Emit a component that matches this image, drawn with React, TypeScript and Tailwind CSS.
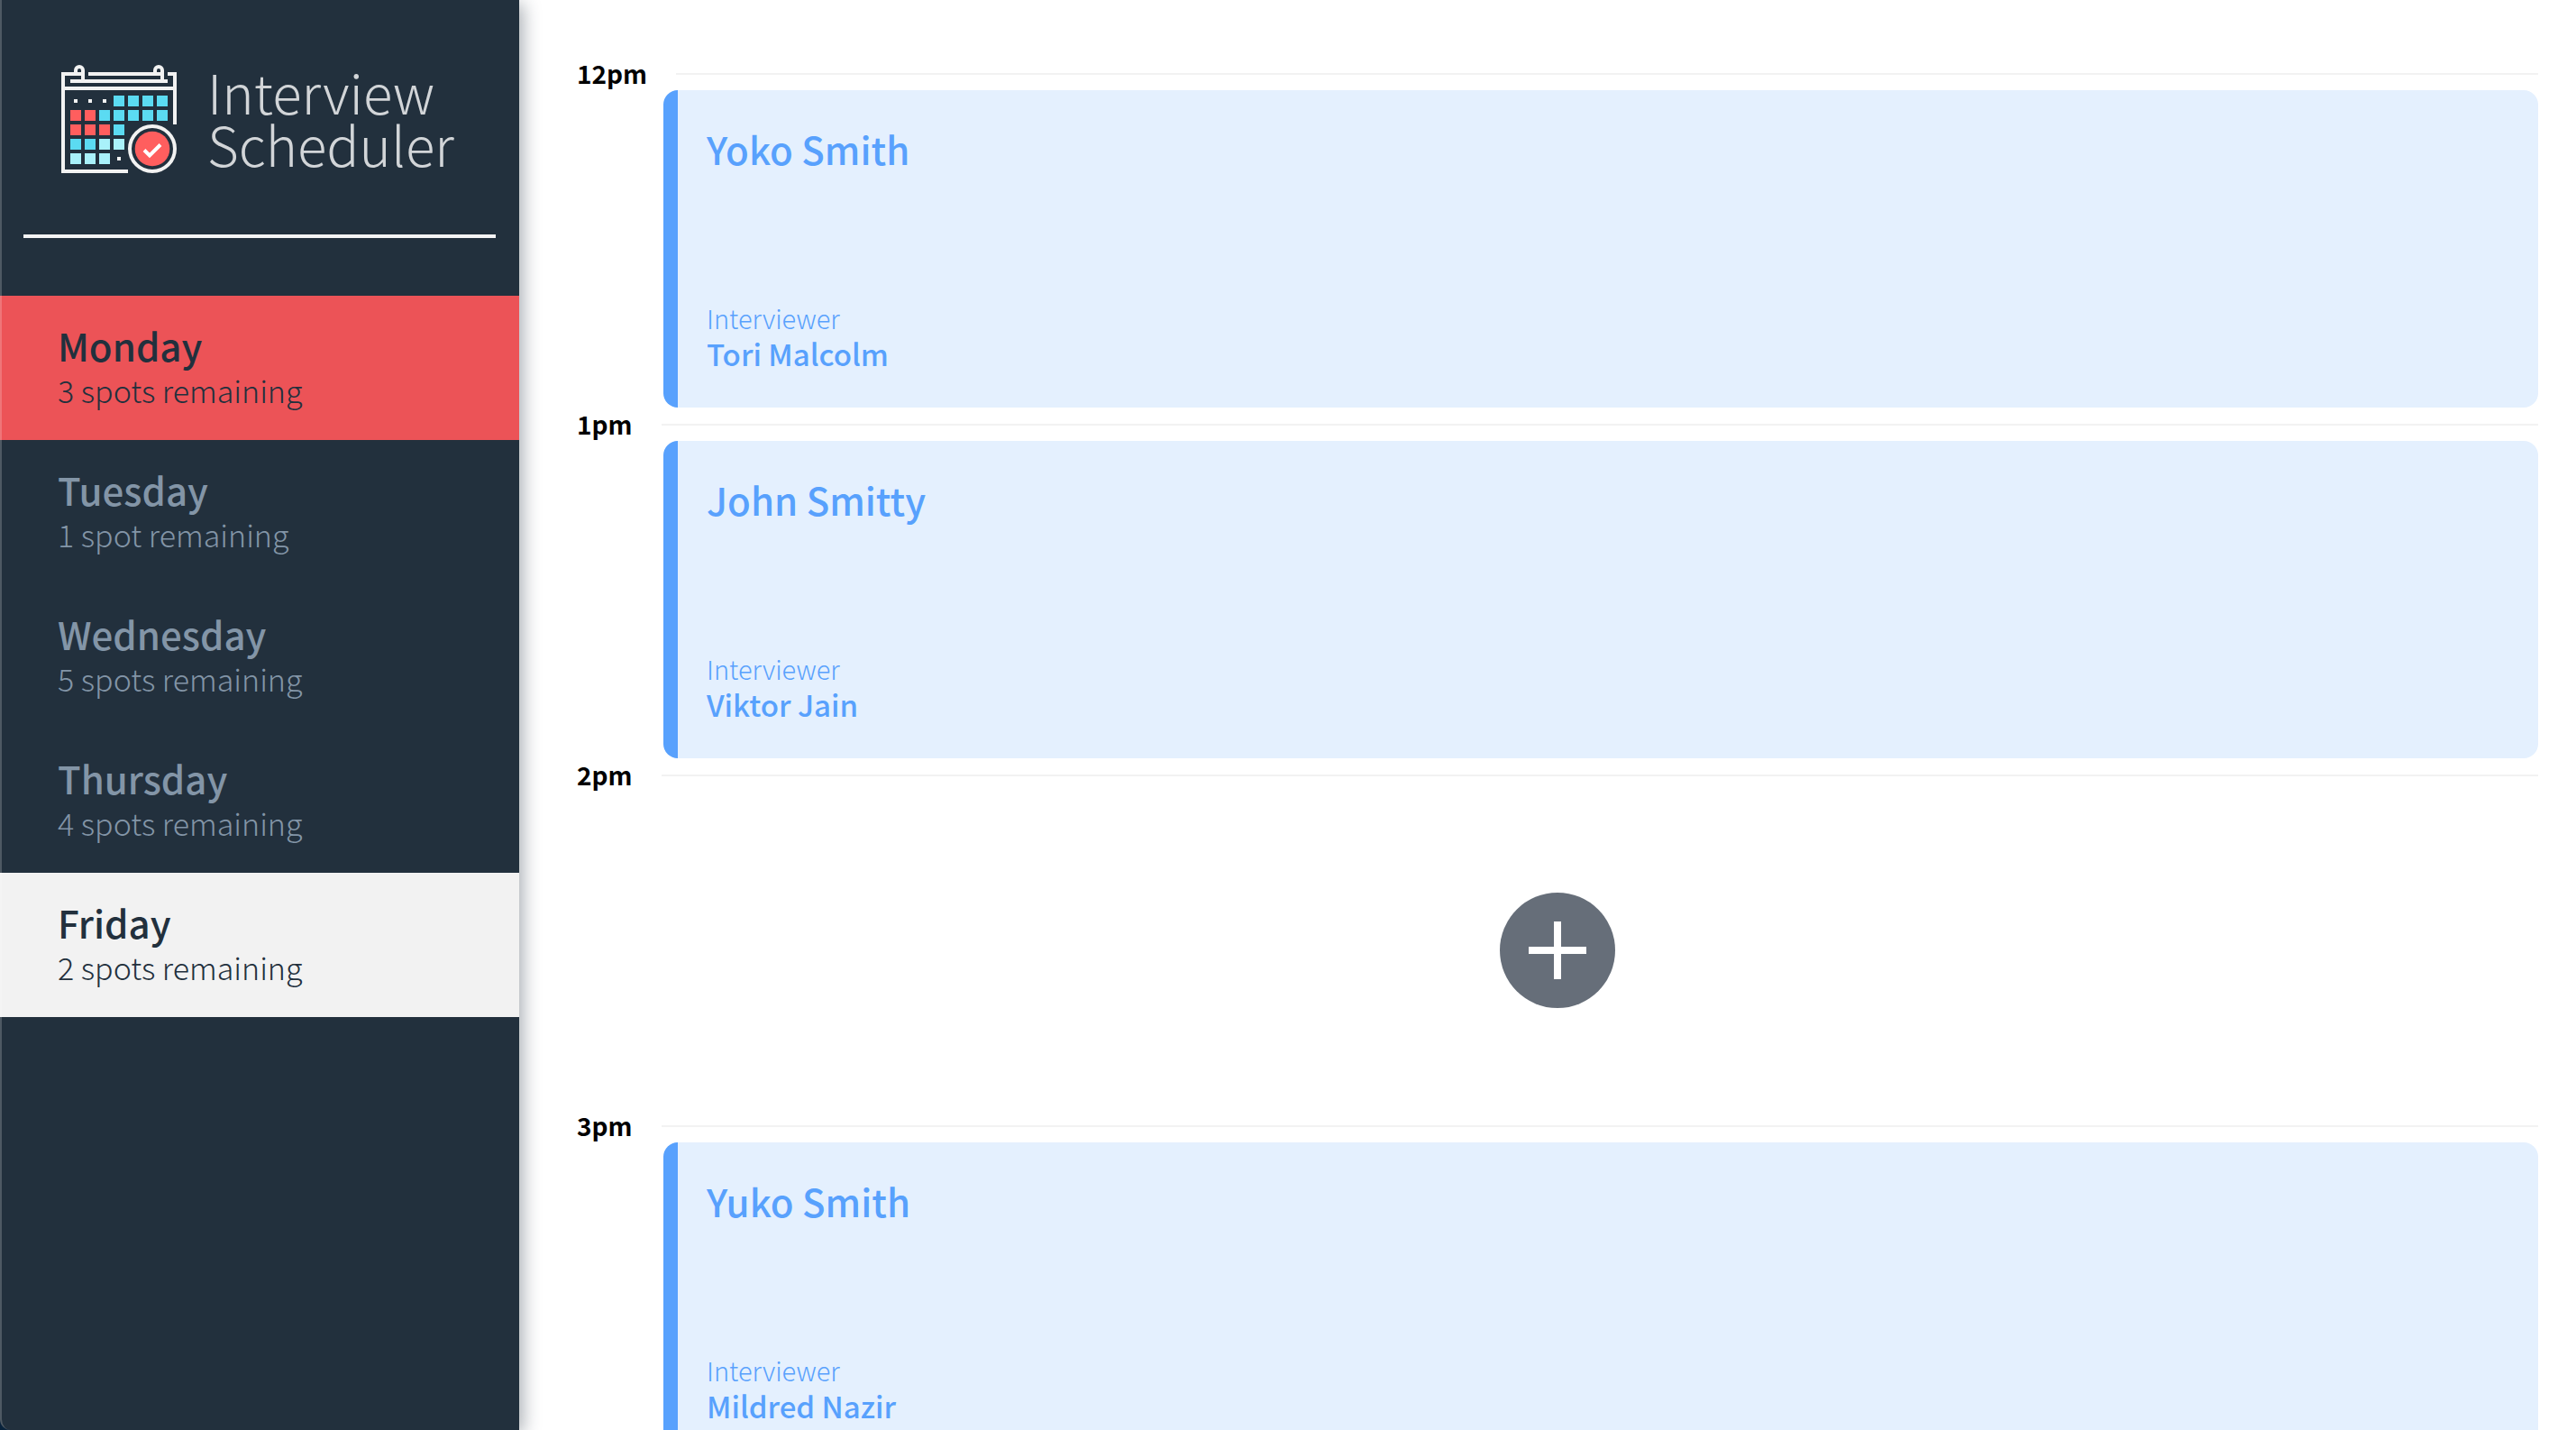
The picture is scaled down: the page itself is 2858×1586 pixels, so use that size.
import React from "react";

type Day = { name: string; spots: string; state: "hover" | "idle" | "selected" };

const days: Day[] = [
  { name: "Monday", spots: "3 spots remaining", state: "hover" },
  { name: "Tuesday", spots: "1 spot remaining", state: "idle" },
  { name: "Wednesday", spots: "5 spots remaining", state: "idle" },
  { name: "Thursday", spots: "4 spots remaining", state: "idle" },
  { name: "Friday", spots: "2 spots remaining", state: "selected" },
];

const dayStyles: Record<Day["state"], string> = {
  hover: "bg-[#ec5357] text-[#22303d]",
  idle: "text-[#8395a7]",
  selected: "bg-[#f2f2f2] text-[#22303d]",
};

type Slot = { time: string; student?: string; interviewer?: string };

const slots: Slot[] = [
  { time: "12pm", student: "Yoko Smith", interviewer: "Tori Malcolm" },
  { time: "1pm", student: "John Smitty", interviewer: "Viktor Jain" },
  { time: "2pm" },
  { time: "3pm", student: "Yuko Smith", interviewer: "Mildred Nazir" },
];

// One string per calendar row: r = red, c = cyan, l = light cyan, d = dot.
const cells = ["dddcccc", "rrccccc", "rrrc", "ccll", "llld"];
const cellColors: Record<string, string> = { r: "#ff5e5e", c: "#5bdbf2", l: "#a9f1fa" };

function CalendarLogo() {
  return (
    <svg className="h-[120px] w-[128px] shrink-0" viewBox="0 0 128 120" fill="none" aria-hidden="true">
      <g stroke="#f2f2f2" strokeWidth="4">
        <path d="M74 118H2V10H24" />
        <path d="M30 10H110" />
        <path d="M118 10H126V66" />
        <path d="M10 18H118" />
        <path d="M2 26H126" />
        <path d="M16 10V6a4 4 0 0 1 8 0V18" />
        <path d="M104 10V6a4 4 0 0 1 8 0V18" />
      </g>
      {cells.map((row, y) =>
        row.split("").map((c, x) =>
          c === "d" ? (
            <rect key={`${x}-${y}`} x={14 + x * 16} y={38 + y * 16} width="4" height="4" fill="#f2f2f2" />
          ) : (
            <rect key={`${x}-${y}`} x={10 + x * 16} y={34 + y * 16} width="12" height="12" fill={cellColors[c]} />
          ),
        ),
      )}
      <circle cx="101" cy="93" r="25" stroke="#f2f2f2" strokeWidth="4" />
      <circle cx="101" cy="93" r="19.3" fill="#ff5e5e" />
      <path d="M92 94.5L98 100.500L110 88.500" stroke="#fff" strokeWidth="4" />
    </svg>
  );
}

function Sidebar() {
  return (
    <aside className="relative z-10 flex w-[576px] shrink-0 flex-col rounded-bl-[12px] bg-[#22303d] shadow-[4px_4px_20px_rgba(34,47,62,0.4)]">
      <h1 className="flex items-center gap-[34px] px-[68px] pt-[72px] text-[60px] leading-[58px] font-light text-[#d2d5d8]">
        <CalendarLogo />
        <span className="pb-1">
          Interview
          <br />
          Scheduler
        </span>
      </h1>
      <hr className="mx-[26px] mt-[68px] mb-16 border-t-4 border-[#f4f4f4]" />
      <nav>
        <ul>
          {days.map((day) => (
            <li key={day.name}>
              <button
                type="button"
                className={`block w-full px-16 py-[30px] text-left leading-[50px] ${dayStyles[day.state]}`}
              >
                <span className="block text-[42px] font-medium">{day.name}</span>
                <span className="block text-[34px] font-light">{day.spots}</span>
              </button>
            </li>
          ))}
        </ul>
      </nav>
      <div className="pointer-events-none absolute inset-0 rounded-bl-[12px] border-l-2 border-white/20" />
    </aside>
  );
}

function Appointment({ time, student, interviewer }: Slot) {
  return (
    <article>
      <header className="flex items-center gap-8">
        <h4 className="text-[28px] leading-[37px] font-bold text-black">{time}</h4>
        <hr className="grow border-t-2 border-[#f2f2f2]" />
      </header>
      {student ? (
        <div className="ml-24 flex h-[352px] flex-col justify-between rounded-2xl border-l-16 border-[#58a1fd] bg-[#e4f0fe] px-8 py-10 text-[#58a1fd]">
          <h2 className="text-[42px] leading-[50px] font-medium">{student}</h2>
          <section>
            <h4 className="text-[29px] leading-10 font-light">Interviewer</h4>
            <h3 className="text-[33px] leading-10 font-medium">{interviewer}</h3>
          </section>
        </div>
      ) : (
        <div className="flex h-[352px] items-center justify-center">
          <button type="button" aria-label="Add" className="rounded-full">
            <svg className="size-32" viewBox="0 0 128 128" aria-hidden="true">
              <circle cx="64" cy="64" r="64" fill="#666e79" />
              <path d="M64 32V96M32 64H96" stroke="#fff" strokeWidth="8" />
            </svg>
          </button>
        </div>
      )}
    </article>
  );
}

export default function App() {
  return (
    <div className="flex h-screen overflow-hidden bg-[#06223c] font-['Noto_Sans_CJK_SC','Noto_Sans',sans-serif]">
      <Sidebar />
      <main className="-ml-8 min-w-0 grow overflow-hidden bg-white pt-[63px] pr-[42px] pl-24">
        {slots.map((slot) => (
          <Appointment key={slot.time} {...slot} />
        ))}
      </main>
    </div>
  );
}
